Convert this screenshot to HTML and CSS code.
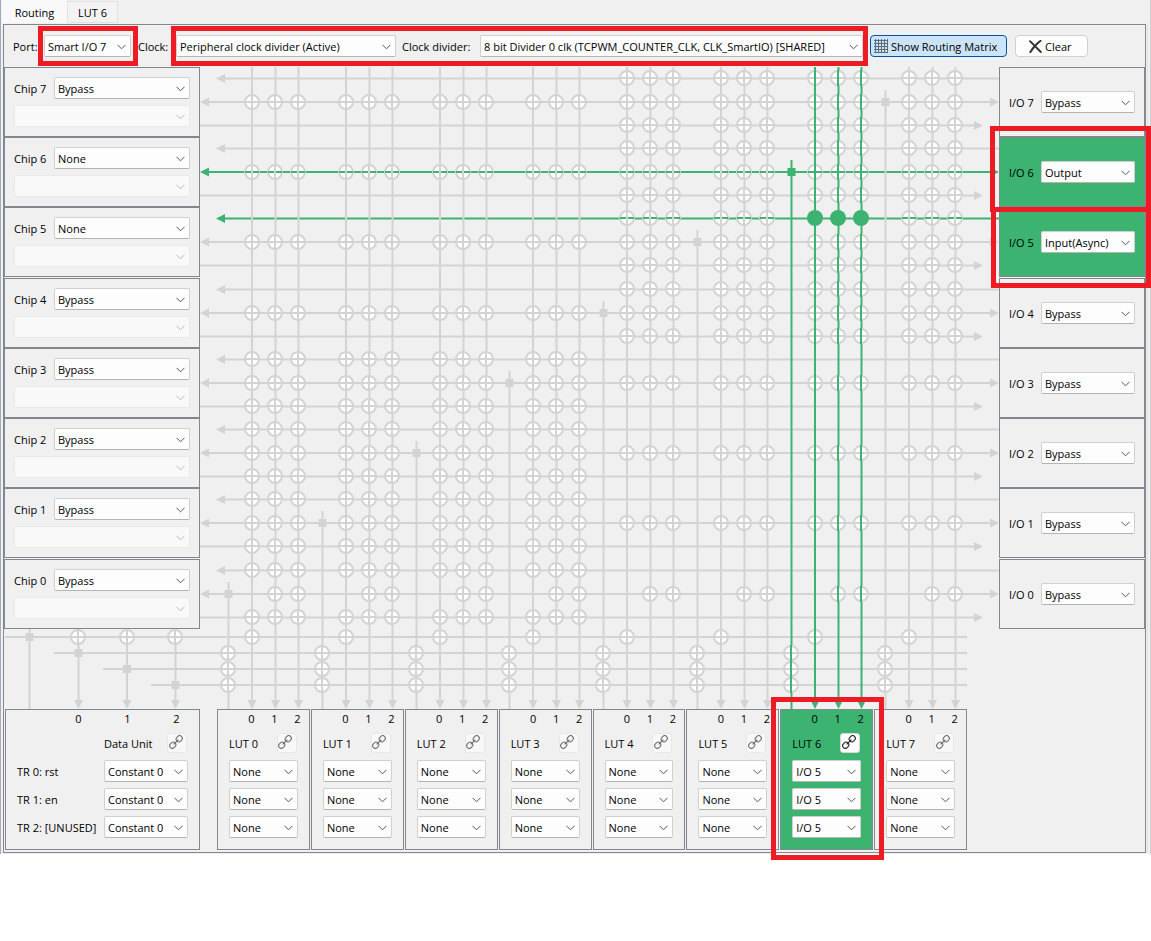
FILE: index.html
```html
<!DOCTYPE html>
<html lang="en">
<head>
<meta charset="utf-8">
<title>Smart I/O Configurator</title>
<link rel="stylesheet" href="styles.css">
</head>
<body>
<svg class="defs" width="0" height="0" aria-hidden="true">
  <symbol id="i-link" viewBox="0 0 14 14">
    <g transform="rotate(-45 7 7)" fill="none" stroke="currentColor" stroke-width="1.1">
      <rect x="-.8" y="4.4" width="6.4" height="5.2" rx="2.5"/>
      <rect x="8.4" y="4.4" width="6.4" height="5.2" rx="2.5"/>
      <path d="M3.600 7h6.800"/>
    </g>
  </symbol>
</svg>
<main class="app">
  <div class="tabs" role="tablist">
    <button class="tab tab-active" role="tab" aria-selected="true">Routing</button>
    <button class="tab" role="tab" aria-selected="false">LUT 6</button>
  </div>
  <div class="pane">
  <section class="panel">
    <div class="toolbar">
      <label class="label-port" for="port">Port:</label>
      <div class="callout callout-port"><select id="port" class="select-port"><option>Smart I/O 7</option></select></div>
      <label class="label-clock" for="clock">Clock:</label>
      <div class="callout callout-clock">
        <select id="clock" class="select-clock"><option>Peripheral clock divider (Active)</option></select>
        <label class="label-divider" for="divider">Clock divider:</label>
        <select id="divider" class="select-divider"><option>8 bit Divider 0 clk (TCPWM_COUNTER_CLK, CLK_SmartIO) [SHARED]</option></select>
      </div>
      <button class="tool tool-on" aria-pressed="true">
        <svg width="14" height="14" viewBox="0 0 14 14" aria-hidden="true"><path d="M1.5 0v14M4.5 0v14M7.5 0v14M10.5 0v14M13.5 0v14M0 1.5h14M0 4.5h14M0 7.5h14M0 10.5h14M0 13.5h14" stroke="#5f6b75" fill="none"/></svg>
        <span>Show Routing Matrix</span></button>
      <button class="tool tool-clear">
        <svg width="13" height="13" viewBox="0 0 13 13" aria-hidden="true"><path d="M1 1.2 11.8 12M11.6.8C7 4 4 7.500 1.200 12.200" stroke="#333" stroke-width="1.9" stroke-linecap="round" fill="none"/></svg>
        <span>Clear</span></button>
    </div>

    <div class="stage" id="stage">
      <svg class="wires" id="wires" role="img" aria-label="Routing matrix"></svg>

      <div class="chips">
        <div class="chip"><label for="c7">Chip 7</label><select id="c7"><option>Bypass</option></select><select class="wide" disabled aria-label="Chip 7 source"></select></div>
        <div class="chip"><label for="c6">Chip 6</label><select id="c6"><option>None</option></select><select class="wide" disabled aria-label="Chip 6 source"></select></div>
        <div class="chip"><label for="c5">Chip 5</label><select id="c5"><option>None</option></select><select class="wide" disabled aria-label="Chip 5 source"></select></div>
        <div class="chip spaced"><label for="c4">Chip 4</label><select id="c4"><option>Bypass</option></select><select class="wide" disabled aria-label="Chip 4 source"></select></div>
        <div class="chip"><label for="c3">Chip 3</label><select id="c3"><option>Bypass</option></select><select class="wide" disabled aria-label="Chip 3 source"></select></div>
        <div class="chip"><label for="c2">Chip 2</label><select id="c2"><option>Bypass</option></select><select class="wide" disabled aria-label="Chip 2 source"></select></div>
        <div class="chip"><label for="c1">Chip 1</label><select id="c1"><option>Bypass</option></select><select class="wide" disabled aria-label="Chip 1 source"></select></div>
        <div class="chip spaced"><label for="c0">Chip 0</label><select id="c0"><option>Bypass</option></select><select class="wide" disabled aria-label="Chip 0 source"></select></div>
      </div>

      <div class="ios">
        <div class="io"><label for="io7">I/O 7</label><select id="io7"><option>Bypass</option></select></div>
        <div class="io used callout callout-io6"><label for="io6">I/O 6</label><select id="io6"><option>Output</option></select></div>
        <div class="io used callout callout-io5"><label for="io5">I/O 5</label><select id="io5"><option>Input(Async)</option></select></div>
        <div class="io spaced"><label for="io4">I/O 4</label><select id="io4"><option>Bypass</option></select></div>
        <div class="io"><label for="io3">I/O 3</label><select id="io3"><option>Bypass</option></select></div>
        <div class="io"><label for="io2">I/O 2</label><select id="io2"><option>Bypass</option></select></div>
        <div class="io"><label for="io1">I/O 1</label><select id="io1"><option>Bypass</option></select></div>
        <div class="io spaced"><label for="io0">I/O 0</label><select id="io0"><option>Bypass</option></select></div>
      </div>

      <div class="units">
        <div class="unit unit-data">
          <div class="ports"><span>0</span><span>1</span><span>2</span></div>
          <div class="unit-head"><span>Data Unit</span><button class="link" disabled aria-label="Open Data Unit"><svg width="14" height="14"><use href="#i-link"/></svg></button></div>
          <div class="inputs">
            <label for="tr0">TR 0: rst</label><select id="tr0"><option>Constant 0</option></select>
            <label for="tr1">TR 1: en</label><select id="tr1"><option>Constant 0</option></select>
            <label for="tr2">TR 2: [UNUSED]</label><select id="tr2"><option>Constant 0</option></select>
          </div>
        </div>
        <div class="luts">
          <div class="unit">
            <div class="ports"><span>0</span><span>1</span><span>2</span></div>
            <div class="unit-head"><span>LUT 0</span><button class="link" disabled aria-label="Open LUT 0"><svg width="14" height="14"><use href="#i-link"/></svg></button></div>
            <div class="inputs"><select aria-label="LUT 0 input 0"><option>None</option></select><select aria-label="LUT 0 input 1"><option>None</option></select><select aria-label="LUT 0 input 2"><option>None</option></select></div>
          </div>
          <div class="unit">
            <div class="ports"><span>0</span><span>1</span><span>2</span></div>
            <div class="unit-head"><span>LUT 1</span><button class="link" disabled aria-label="Open LUT 1"><svg width="14" height="14"><use href="#i-link"/></svg></button></div>
            <div class="inputs"><select aria-label="LUT 1 input 0"><option>None</option></select><select aria-label="LUT 1 input 1"><option>None</option></select><select aria-label="LUT 1 input 2"><option>None</option></select></div>
          </div>
          <div class="unit">
            <div class="ports"><span>0</span><span>1</span><span>2</span></div>
            <div class="unit-head"><span>LUT 2</span><button class="link" disabled aria-label="Open LUT 2"><svg width="14" height="14"><use href="#i-link"/></svg></button></div>
            <div class="inputs"><select aria-label="LUT 2 input 0"><option>None</option></select><select aria-label="LUT 2 input 1"><option>None</option></select><select aria-label="LUT 2 input 2"><option>None</option></select></div>
          </div>
          <div class="unit">
            <div class="ports"><span>0</span><span>1</span><span>2</span></div>
            <div class="unit-head"><span>LUT 3</span><button class="link" disabled aria-label="Open LUT 3"><svg width="14" height="14"><use href="#i-link"/></svg></button></div>
            <div class="inputs"><select aria-label="LUT 3 input 0"><option>None</option></select><select aria-label="LUT 3 input 1"><option>None</option></select><select aria-label="LUT 3 input 2"><option>None</option></select></div>
          </div>
          <div class="unit">
            <div class="ports"><span>0</span><span>1</span><span>2</span></div>
            <div class="unit-head"><span>LUT 4</span><button class="link" disabled aria-label="Open LUT 4"><svg width="14" height="14"><use href="#i-link"/></svg></button></div>
            <div class="inputs"><select aria-label="LUT 4 input 0"><option>None</option></select><select aria-label="LUT 4 input 1"><option>None</option></select><select aria-label="LUT 4 input 2"><option>None</option></select></div>
          </div>
          <div class="unit">
            <div class="ports"><span>0</span><span>1</span><span>2</span></div>
            <div class="unit-head"><span>LUT 5</span><button class="link" disabled aria-label="Open LUT 5"><svg width="14" height="14"><use href="#i-link"/></svg></button></div>
            <div class="inputs"><select aria-label="LUT 5 input 0"><option>None</option></select><select aria-label="LUT 5 input 1"><option>None</option></select><select aria-label="LUT 5 input 2"><option>None</option></select></div>
          </div>
          <div class="unit used callout callout-lut">
            <div class="ports"><span>0</span><span>1</span><span>2</span></div>
            <div class="unit-head"><span>LUT 6</span><button class="link" aria-label="Open LUT 6"><svg width="14" height="14"><use href="#i-link"/></svg></button></div>
            <div class="inputs"><select aria-label="LUT 6 input 0"><option>I/O 5</option></select><select aria-label="LUT 6 input 1"><option>I/O 5</option></select><select aria-label="LUT 6 input 2"><option>I/O 5</option></select></div>
          </div>
          <div class="unit">
            <div class="ports"><span>0</span><span>1</span><span>2</span></div>
            <div class="unit-head"><span>LUT 7</span><button class="link" disabled aria-label="Open LUT 7"><svg width="14" height="14"><use href="#i-link"/></svg></button></div>
            <div class="inputs"><select aria-label="LUT 7 input 0"><option>None</option></select><select aria-label="LUT 7 input 1"><option>None</option></select><select aria-label="LUT 7 input 2"><option>None</option></select></div>
          </div>
        </div>
      </div>
    </div>
  </section>
  </div>
</main>
<script src="wires.js"></script>
</body>
</html>
```

FILE: styles.css
```css
:root {
  --face: #f0f0f0;
  --edge: #828790;
  --green: #3cb371;
  --wire: #d3d3d3;
  --red: #ed1c24;
}

* { box-sizing: border-box; }

body {
  min-height: 100vh;
  margin: 0;
  background: #fff;
  color: #000;
  font: 11px/16px "Open Sans", "Noto Sans", sans-serif;
}

.defs { display: block; }

.app {
  min-width: 1151px;
  padding: 0 2px 1px 1px;
  border-left: 1px solid #a3adba;
  border-right: 1px solid #d0d0d0;
  background: var(--face);
}

/* Tabs */
.tabs {
  display: flex;
  align-items: flex-end;
  height: 23px;
}

.tab {
  width: 50px;
  height: 22px;
  padding: 2px 0 0;
  border: 1px solid #e2e2e2;
  border-left: 0;
  background: #f3f3f3;
  font: inherit;
  color: inherit;
}

.tab-active {
  width: 66px;
  height: 23px;
  border-color: #f9f9f9;
  border-right-color: #e2e2e2;
  background: #f9f9f9;
}

.pane {
  padding: 1px 1px 0 1px;
  border-right: 1px solid #e2e2e2;
}

.panel {
  padding-bottom: 2px;
  border: 1px solid var(--edge);
}

/* Form controls */
label { padding-top: 2px; }

select {
  appearance: none;
  width: 100%;
  min-width: 0;
  height: 22px;
  margin: 0;
  padding: 2px 16px 0 3px;
  border: 1px solid #d0d0d0;
  border-bottom-color: #b4b4b4;
  border-radius: 2px;
  background: #fdfdfd url("data:image/svg+xml,%3Csvg xmlns='http://www.w3.org/2000/svg' width='9' height='6'%3E%3Cpath d='M.5.8 4.500 4.800 8.500.8' fill='none' stroke='%23555'/%3E%3C/svg%3E") no-repeat right 4px top 8px;
  font: inherit;
  color: #000;
}

select:disabled {
  border-color: #e9e9e9;
  background-color: #f9f9f9;
  background-image: url("data:image/svg+xml,%3Csvg xmlns='http://www.w3.org/2000/svg' width='9' height='6'%3E%3Cpath d='M.5.8 4.500 4.800 8.500.8' fill='none' stroke='%23b8b8b8'/%3E%3C/svg%3E");
  opacity: 1;
}

/* Toolbar */
.toolbar {
  display: flex;
  align-items: center;
  height: 42px;
  padding-left: 9px;
  white-space: nowrap;
}

.label-port { width: 31px; }
.label-clock { width: 38px; margin-left: 7px; }
.label-divider { width: 78px; margin-left: 7px; }
.select-port { width: 87px; }
.select-clock { width: 220px; }
.callout-clock .label-divider { margin-left: 6px; }
.select-divider { width: 383px; }

.tool {
  display: flex;
  align-items: center;
  gap: 3px;
  height: 22px;
  padding: 0 4px 0 3px;
  border: 1px solid #d0d0d0;
  border-radius: 4px;
  background: #fdfdfd;
  font: inherit;
  color: #000;
}

.tool span { padding-top: 2px; }

.tool-on {
  width: 137px;
  margin: 0 8px 0 7px;
  border-color: #0054a6;
  background: #cce4f7;
}

.tool-clear {
  width: 73px;
  padding-left: 13px;
}

/* Red highlight frames */
.callout { position: relative; }

.callout::after {
  content: "";
  position: absolute;
  z-index: 1;
  border: 5px solid var(--red);
  pointer-events: none;
}

.callout-port::after { inset: -9px -7px -9px -6px; }
.callout-clock { display: flex; align-items: center; }
.callout-clock::after { inset: -9px -5px; }
.callout-io6::after { inset: -12px -7px -6px -10px; }
.callout-io5::after { inset: -1px -7px -12px -9px; }
.callout-lut::after { inset: -13px -12px -11px -10px; }

/* Routing stage */
.stage {
  display: grid;
  grid-template-columns: 196px 1fr 146px;
  grid-template-rows: auto 80px auto;
}

.wires {
  grid-area: 1 / 1 / 4 / 4;
  width: 100%;
  height: 100%;
}

.chips { grid-area: 1 / 1; }
.ios { grid-area: 1 / 3; }

.chip,
.io {
  display: grid;
  align-items: center;
  height: 70px;
  padding: 0 9px;
  border: 1px solid var(--edge);
  background: var(--face);
}

.chip {
  grid-template-columns: 40px 1fr;
  align-content: center;
  row-gap: 6px;
}

.chip .wide { grid-column: 1 / 3; }
.io { grid-template-columns: 32px 1fr; }
.spaced { margin-top: 1px; }

.used,
.io.used { background: var(--green); }

/* Data unit and LUTs */
.units {
  grid-area: 3 / 1 / 4 / 4;
  display: flex;
  gap: 17px;
  padding-left: 1px;
}

.luts {
  display: grid;
  grid-template-columns: repeat(8, 1fr);
  gap: 1px;
  width: 750px;
}

.unit {
  min-width: 0;
  border: 1px solid var(--edge);
}

.unit-data { width: 195px; }

.ports {
  display: flex;
  padding-left: 22px;
  line-height: 18px;
}

.ports span {
  flex: none;
  width: 23px;
  text-align: center;
}

.unit-data .ports { padding-left: 48px; }
.unit-data .ports span { width: 49px; }

.unit-head {
  display: flex;
  align-items: center;
  justify-content: space-between;
  height: 20px;
  margin: 5px 12px 7px 11px;
  white-space: nowrap;
}

.unit-head span { padding-top: 2px; }
.unit-data .unit-head { margin-left: 98px; }

.link {
  display: grid;
  place-items: center;
  width: 20px;
  height: 20px;
  padding: 0 3px 2px 0;
  border: 1px solid #d8d8d8;
  border-radius: 3px;
  background: #fdfdfd;
  color: #222;
}

.link:disabled {
  border-color: #e8e8e8;
  background: #f8f8f8;
  color: #707070;
}

.inputs {
  display: grid;
  row-gap: 6px;
  align-items: center;
  padding: 0 11px 11px;
  white-space: nowrap;
}

.unit-data .inputs { grid-template-columns: 87px 1fr; }

/* Wires */
.wire { stroke: var(--wire); stroke-width: 2; fill: none; }
.wire.on { stroke: var(--green); }
.solid { fill: var(--wire); }
.solid.on { fill: var(--green); }
.ring { fill: #fff; stroke: var(--wire); stroke-width: 2; }
```

FILE: wires.js
```js
// Draws the routing matrix between the chip, I/O and LUT panels.
const stage = document.getElementById("stage");
const svg = document.getElementById("wires");

const LEFT = 196;
const IO_WIDTH = 146;
const BOTTOM = 642;
const TRIGGER_RIGHT = 963;
const rowTops = [0, 70, 140, 211, 281, 351, 421, 492];
const triggerRows = [
  { y: 570, x: 25.5, from: 1 },
  { y: 586, x: 74.5, from: 50 },
  { y: 602, x: 123, from: 99 },
  { y: 618, x: 171.5, from: 147 }
];
const ACTIVE_LUT = 6;

const cls = (name, on) => `class="${name}${on ? " on" : ""}"`;
const line = (x1, y1, x2, y2, on) => `<path ${cls("wire", on)} d="M${x1} ${y1}L${x2} ${y2}"/>`;
const square = (x, y, on) => `<rect ${cls("solid", on)} x="${x - 4}" y="${y - 4}" width="8" height="8"/>`;
const arrowLeft = (x, y, on) => `<path ${cls("solid", on)} d="M${x} ${y}l9-4.500v9z"/>`;
const arrowRight = (x, y, on) => `<path ${cls("solid", on)} d="M${x} ${y}l-9-4.500v9z"/>`;
const arrowDown = (x, y, on) => `<path ${cls("solid", on)} d="M${x} ${y}l-4.500-9h9z"/>`;

function crossing(x, y, rowOn, colOn) {
  if (rowOn === "input" && colOn) return `<circle class="solid on" cx="${x}" cy="${y}" r="8"/>`;
  return `<circle class="ring" cx="${x}" cy="${y}" r="7"/>` +
    line(x - 7, y, x + 7, y, rowOn) + line(x, y - 8, x, y + 8, colOn);
}

function draw() {
  const right = stage.clientWidth - IO_WIDTH;
  let rows = "", cols = "", live = "", dots = "";

  rowTops.forEach((top, i) => {
    const pin = 7 - i;
    const inOn = pin === 5;
    const outOn = pin === 6;
    rows += line(LEFT + 24, top + 11.5, right, top + 11.5, inOn) + arrowLeft(LEFT + 16, top + 11.5, inOn);
    rows += line(LEFT + 8, top + 35, right - 8, top + 35, outOn) +
      arrowLeft(LEFT, top + 35, outOn) + arrowRight(right, top + 35, outOn);
    rows += line(LEFT, top + 58.5, right - 24, top + 58.5) + arrowRight(right - 16, top + 58.5);
  });

  triggerRows.forEach((t, i) => {
    rows += line(t.from, t.y, TRIGGER_RIGHT, t.y);
    cols += line(t.x, 562, t.x, i ? BOTTOM - 8 : BOTTOM);
    if (i) cols += arrowDown(t.x, BOTTOM);
    dots += square(t.x, t.y);
    if (i) dots += crossing(Math.floor(t.x), 570);
  });

  for (let lut = 0; lut < 8; lut++) {
    const x = 213 + Math.round(93.8 * lut);
    const on = lut === ACTIVE_LUT;
    const outX = x + 11;
    const outTop = rowTops[7 - lut] + 35;
    const out = line(outX + 0.5, outTop - 12, outX + 0.5, BOTTOM, on);
    const ins = [x + 35, x + 58.5, x + 81.5]
      .map(cx => line(cx, 0, cx, BOTTOM - 8, on) + arrowDown(cx, BOTTOM, on)).join("");
    if (on) live += out + ins; else cols += out + ins;
    dots += square(outX + 0.5, outTop, on);

    rowTops.forEach((top, i) => {
      const pin = 7 - i;
      [35, 58, 81].forEach((dx, n) => {
        if ((pin > 3) === (lut > 3)) {
          dots += crossing(x + dx, top + 11, pin === 5 ? "input" : "", on);
          dots += crossing(x + dx, top + 58, "", on);
        }
        if (pin > 0 || n > 0) dots += crossing(x + dx, top + 35, pin === 6, on);
      });
    });
    dots += crossing(x + 35, 570, false, on);
    [586, 602, 618].forEach(y => { dots += crossing(outX, y, false, on); });
  }
  svg.innerHTML = rows + cols + live + dots;
}

draw();
window.addEventListener("resize", draw);
```
